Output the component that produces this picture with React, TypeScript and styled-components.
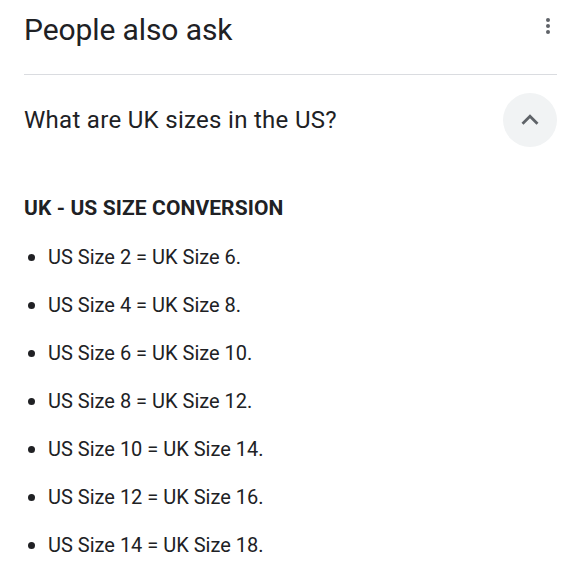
import styled, { createGlobalStyle } from 'styled-components';

const GlobalStyle = createGlobalStyle`
    html, body {
        margin: 0;
        padding: 0;
        background: #fff;
    }
    body {
        font-family: Roboto, "Liberation Sans", sans-serif;
        color: #202124;
    }
`;

const sizes = [
    [2, 6],
    [4, 8],
    [6, 10],
    [8, 12],
    [10, 14],
    [12, 16],
    [14, 18],
];

const App = () => {
    return (
        <>
            <GlobalStyle />
            <StyledPage>
                <StyledHeader>
                    <StyledTitle>People also ask</StyledTitle>
                    <StyledMore aria-label="More options">
                        <StyledDot />
                        <StyledDot />
                        <StyledDot />
                    </StyledMore>
                </StyledHeader>
                <StyledQuestion>
                    <StyledQuestionText>What are UK sizes in the US?</StyledQuestionText>
                    <StyledToggle aria-label="Collapse">
                        <svg width="34" height="34" viewBox="0 0 24 24">
                            <path d="M7.41 15.41 12 10.83l4.59 4.58L18 14l-6-6-6 6z" fill="#5f6368" />
                        </svg>
                    </StyledToggle>
                </StyledQuestion>
                <StyledAnswer>
                    <StyledHeading>UK - US SIZE CONVERSION</StyledHeading>
                    <StyledList>
                        {sizes.map(([us, uk]) => (
                            <StyledItem key={us}>US Size {us} = UK Size {uk}.</StyledItem>
                        ))}
                    </StyledList>
                </StyledAnswer>
            </StyledPage>
        </>
    );
};

const StyledPage = styled.div`
    width: 580px;
    padding: 0 23px 0 24px;
    box-sizing: border-box;
`;

const StyledHeader = styled.div`
    display: flex;
    align-items: flex-start;
    justify-content: space-between;
    height: 75px;
    padding-top: 13px;
    box-sizing: border-box;
    border-bottom: 1px solid #dadce0;
`;

const StyledTitle = styled.h2`
    margin: 0;
    font-size: 30px;
    line-height: 34px;
    font-weight: 400;
    color: #202124;
    letter-spacing: -0.1px;
`;

const StyledMore = styled.div`
    display: flex;
    flex-direction: column;
    gap: 2px;
    margin: 5px 7px 0 0;
`;

const StyledDot = styled.span`
    width: 4px;
    height: 4px;
    border-radius: 50%;
    background: #5f6368;
`;

const StyledQuestion = styled.div`
    display: flex;
    align-items: center;
    justify-content: space-between;
    height: 89px;
`;

const StyledQuestionText = styled.div`
    font-size: 24px;
    letter-spacing: 0.3px;
    color: #202124;
`;

const StyledToggle = styled.div`
    width: 54px;
    height: 54px;
    border-radius: 50%;
    background: #f1f3f4;
    display: flex;
    align-items: center;
    justify-content: center;
`;

const StyledAnswer = styled.div`
    padding-top: 26px;
`;

const StyledHeading = styled.div`
    font-size: 21px;
    font-weight: 700;
    letter-spacing: 0.1px;
    line-height: 36px;
    margin-bottom: 7px;
`;

const StyledList = styled.ul`
    margin: 0;
    padding: 0 0 0 24px;
`;

const StyledItem = styled.li`
    font-size: 20px;
    line-height: 48px;
    color: #202124;
    &::marker {
        font-size: 22px;
    }
`;

export default App;
